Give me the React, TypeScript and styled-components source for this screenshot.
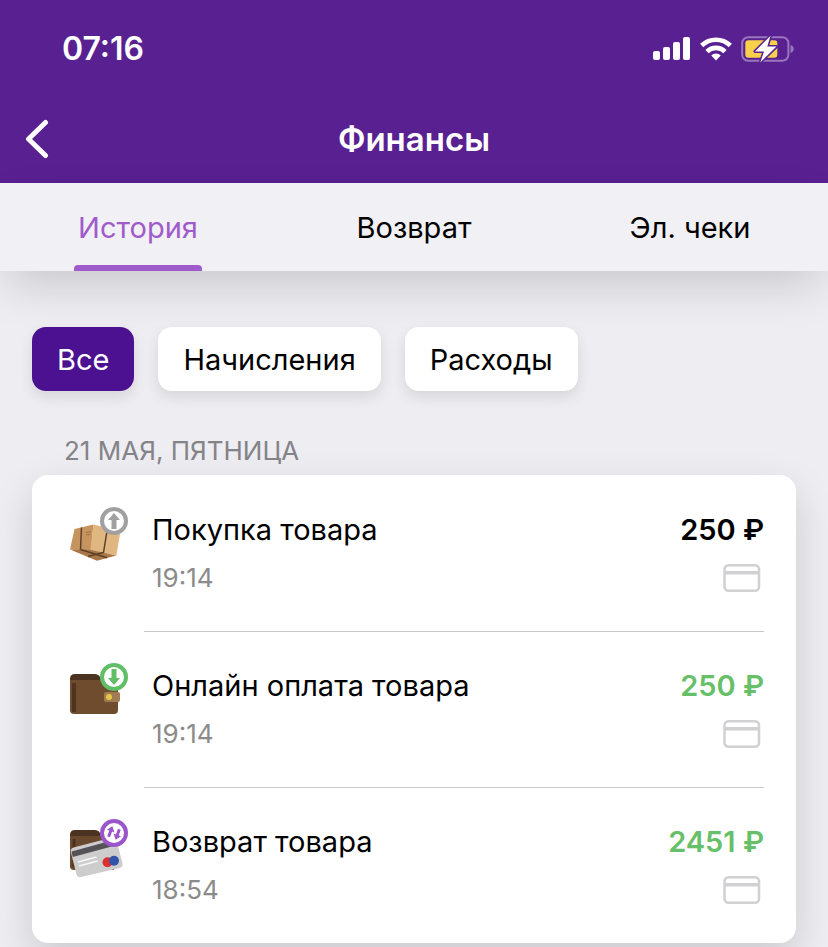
import React, { useState } from "react";
import styled, { createGlobalStyle } from "styled-components";

const GlobalStyle = createGlobalStyle`
  *, *::before, *::after { box-sizing: border-box; }
  body {
    margin: 0;
    background: #eeedf2;
    color: #000;
    font-family: Inter, "Liberation Sans", sans-serif;
  }
  button { font: inherit; color: inherit; border: 0; cursor: pointer; }
  h1, h2, h3, p, ul { margin: 0; padding: 0; }
`;

const Screen = styled.div`
  min-height: 100vh;
  overflow: hidden;
`;

const Header = styled.header`
  background: #582091;
  color: #fff;
`;

const StatusBar = styled.div`
  display: flex;
  align-items: center;
  justify-content: space-between;
  height: 98px;
  padding: 0 33px 0 62px;
`;

const Clock = styled.time`
  font-size: 32px;
  font-weight: 600;
  line-height: 40px;
`;

const StatusIcons = styled.div`
  display: flex;
  align-items: center;
  gap: 9px;
  svg { display: block; }
`;

const NavBar = styled.div`
  display: grid;
  grid-template-columns: 48px 1fr 48px;
  align-items: center;
  height: 85px;
  padding: 0 16px 4px;
`;

const BackButton = styled.button`
  display: flex;
  align-items: center;
  height: 48px;
  padding: 0 0 0 8px;
  background: none;
`;

const Title = styled.h1`
  font-size: 33px;
  font-weight: 600;
  line-height: 40px;
  text-align: center;
`;

const Tabs = styled.nav`
  display: grid;
  grid-template-columns: repeat(3, 1fr);
  height: 88px;
  background: #f1f0f5;
  box-shadow: 0 20px 48px -8px rgba(0, 0, 0, 0.17);
`;

const Tab = styled.button<{ $active: boolean }>`
  display: grid;
  grid-template-rows: 1fr 6px;
  justify-items: center;
  align-items: center;
  padding: 0;
  background: none;
  font-size: 29px;
  line-height: 36px;
  color: ${(p) => (p.$active ? "#a05bcb" : "#000")};

  &::after {
    content: "";
    width: 128px;
    height: 6px;
    border-radius: 4px 4px 0 0;
    background: ${(p) => (p.$active ? "#a05bcb" : "transparent")};
  }
`;

const TabLabel = styled.span`
  padding-top: 8px;
`;

const Main = styled.main`
  padding: 56px 32px 4px;
`;

const Filters = styled.div`
  display: flex;
  gap: 24px;
`;

const Chip = styled.button<{ $active: boolean }>`
  height: 64px;
  padding: 2px 25px 0;
  border-radius: 14px;
  font-size: 29px;
  line-height: 36px;
  color: ${(p) => (p.$active ? "#fff" : "#000")};
  background: ${(p) => (p.$active ? "#4b1190" : "#fff")};
  box-shadow: 0 6px 14px rgba(0, 0, 0, 0.1);
`;

const DateHeading = styled.h2`
  padding: 44px 32px 8px;
  font-size: 26px;
  font-weight: 400;
  line-height: 32px;
  text-transform: uppercase;
  color: #848388;
`;

const Card = styled.ul`
  list-style: none;
  padding: 0 32px;
  border-radius: 16px;
  background: #fff;
  box-shadow: 0 16px 40px rgba(0, 0, 0, 0.15);
`;

const Row = styled.li`
  display: grid;
  grid-template-columns: 80px 1fr;
  height: 156px;
`;

const RowIcon = styled.div`
  padding-top: 28px;
  svg { display: block; }
`;

const RowBody = styled.div<{ $first: boolean }>`
  display: grid;
  grid-template-columns: 1fr auto;
  grid-template-rows: 40px 32px;
  row-gap: 12px;
  padding: 34px 0 0 8px;
  border-top: 1px solid ${(p) => (p.$first ? "transparent" : "#c7c6ca")};
`;

const Name = styled.h3`
  font-size: 29px;
  font-weight: 400;
  line-height: 40px;
`;

const Amount = styled.p<{ $income: boolean }>`
  font-size: 29px;
  font-weight: 600;
  line-height: 40px;
  text-align: right;
  color: ${(p) => (p.$income ? "#68bf69" : "#000")};
`;

const Time = styled.time`
  font-size: 26px;
  line-height: 32px;
  color: #8b8b8b;
`;

const CardMark = styled.span`
  justify-self: end;
  align-self: center;
  padding-right: 3px;
  svg { display: block; }
`;

function SignalIcon() {
  return (
    <svg width="38" height="24" viewBox="0 0 38 24" fill="#fff" aria-label="Сигнал">
      <rect x="0" y="14" width="7" height="9" rx="2" />
      <rect x="10" y="10" width="7" height="13" rx="2" />
      <rect x="20" y="5" width="7" height="18" rx="2" />
      <rect x="30" y="0" width="7" height="23" rx="2" />
    </svg>
  );
}

function WifiIcon() {
  return (
    <svg width="32" height="24" viewBox="0 0 32 24" fill="none" stroke="#fff" strokeWidth="4.6" aria-label="Wi-Fi">
      <path d="M1.7 8.5a20.5 20.5 0 0 1 28.6 0" />
      <path d="M7 14.6a12.8 12.8 0 0 1 18 0" />
      <path d="M16 23.6l-4.8-5a6.800 6.800 0 0 1 9.600 0z" fill="#fff" stroke="none" />
    </svg>
  );
}

function BatteryIcon() {
  return (
    <svg width="54" height="28" viewBox="0 0 54 28" aria-label="Зарядка">
      <rect x="1.2" y="2.2" width="46.2" height="23.6" rx="6" fill="none" stroke="#9a76be" strokeWidth="2" />
      <path d="M49.500 10c2.500.8 3.200 2.800 3.200 4s-.7 3.200-3.200 4z" fill="#9a76be" />
      <rect x="4.300" y="5.300" width="32" height="17.400" rx="3" fill="#f7d149" />
      <path d="M29.500 0.800L14 16.400h9L19.300 27.400 35.500 11.600h-9.200z" fill="#fff" stroke="#582091" strokeWidth="3" paintOrder="stroke" strokeLinejoin="round" />
    </svg>
  );
}

function BackIcon() {
  return (
    <svg width="26" height="40" viewBox="0 0 26 40" fill="none" stroke="#fff" strokeWidth="5" strokeLinecap="round" strokeLinejoin="round" aria-hidden="true">
      <path d="M21.500 3.500L4.500 20l17 16.500" />
    </svg>
  );
}

type Kind = "purchase" | "payment" | "refund";

function PurchaseArt() {
  return (
    <>
      <path d="M6 46.500L26 45.500 52.300 52.500 33 57.700z" fill="#a97748" />
      <path d="M10.500 26L29.500 21.500 27 46.800 6 46.500z" fill="#c6955f" />
      <path d="M29.500 21.500L56.500 28 52.300 52.700 26.500 46.800z" fill="#e0b681" />
      <path d="M17.500 24.500L16.500 46.500" stroke="#5e4028" strokeWidth="1.500" fill="none" />
      <path d="M43.500 25L39.500 49.500 24 53.500" stroke="#5e4028" strokeWidth="1.500" fill="none" />
      <path d="M16.500 46.500L43 54.800" stroke="#5e4028" strokeWidth="1.500" fill="none" />
      <path d="M22 29.500l5-1M22 32l4.500-.7" stroke="#9c7145" strokeWidth="1" />
    </>
  );
}

function WalletArt() {
  return (
    <>
      <path d="M6 20q0-5 5-5h20q5 0 6 6l13 3v28H6z" fill="#4c3321" />
      <path d="M6 21h44q4 0 4 4v26q0 4-4 4H10q-4 0-4-4z" fill="#6f4c2e" />
      <rect x="8" y="24" width="4" height="29" fill="#4f3521" />
      <path d="M40 35q0-2 2-2h12q2 0 2 2v6q0 2-2 2H42q-2 0-2-2z" fill="#a17b54" />
      <circle cx="45" cy="38" r="3" fill="#e5c847" />
    </>
  );
}

function RefundArt() {
  return (
    <>
      <path d="M6 20q0-5 5-5h20q5 0 6 6l13 3v28H6z" fill="#4c3321" />
      <path d="M6 21h44v34H10q-4 0-4-4z" fill="#6a482d" />
      <path d="M10 24v28" stroke="#4b3220" strokeWidth="3" />
      <path d="M9.500 32.500L48 22.500q3.500-.8 4.500 2.500l6 23.500q.8 3.500-2.500 4.500L17 62q-3.500.8-4.500-2.500L6.800 37q-.8-3.500 2.700-4.500z" fill="#cecdce" />
      <path d="M7.500 36.500L51.500 24.500 53.200 30 8.800 42z" fill="#555357" />
      <path d="M14 47l18.500-5M15 51l18.500-5" stroke="#f8f7f8" strokeWidth="1.500" />
      <circle cx="43.500" cy="47.300" r="5" fill="#da302e" />
      <circle cx="50" cy="45.800" r="5" fill="#3454aa" />
    </>
  );
}

function OperationIcon({ kind }: { kind: Kind }) {
  const tone = { purchase: "#a0a0a0", payment: "#5fbe66", refund: "#9b55ca" }[kind];
  return (
    <svg width="66" height="64" viewBox="0 0 66 64" aria-hidden="true">
      {kind === "purchase" && <PurchaseArt />}
      {kind === "payment" && <WalletArt />}
      {kind === "refund" && <RefundArt />}
      <circle cx="50" cy="18" r="12" fill="#fff" stroke={tone} strokeWidth="4" />
      {kind === "purchase" && <path d="M50 10l6 7h-3.500v9h-5v-9H44z" fill={tone} />}
      {kind === "payment" && <path d="M50 26l6-7h-3.500v-9h-5v9H44z" fill={tone} />}
      {kind === "refund" && (
        <g fill={tone}>
          <path d="M0-5.500L4-.5H1.500V5.500h-3V-.5H-4z" transform="translate(46.500 16.500) rotate(20)" />
          <path d="M0 5.500L4 .5H1.500V-5.500h-3V.5H-4z" transform="translate(53.500 19.500) rotate(20)" />
        </g>
      )}
    </svg>
  );
}

function BankCardIcon() {
  return (
    <svg width="38" height="28" viewBox="0 0 38 28" fill="none" stroke="#d1d0d2" strokeWidth="2.500" aria-label="Банковская карта">
      <rect x="1.500" y="1.250" width="34.500" height="25.500" rx="4" />
      <path d="M2 8.700h34" strokeWidth="3.500" />
    </svg>
  );
}

const tabs = ["История", "Возврат", "Эл. чеки"];
const filters = ["Все", "Начисления", "Расходы"];
const operations: { kind: Kind; name: string; time: string; amount: number }[] = [
  { kind: "purchase", name: "Покупка товара", time: "19:14", amount: -250 },
  { kind: "payment", name: "Онлайн оплата товара", time: "19:14", amount: 250 },
  { kind: "refund", name: "Возврат товара", time: "18:54", amount: 2451 },
];

export default function App() {
  const [tab, setTab] = useState(0);
  const [filter, setFilter] = useState(0);
  const shown = operations.filter(
    (o) => filter === 0 || (filter === 1 ? o.amount > 0 : o.amount < 0)
  );

  return (
    <Screen>
      <GlobalStyle />
      <Header>
        <StatusBar>
          <Clock>07:16</Clock>
          <StatusIcons>
            <SignalIcon />
            <WifiIcon />
            <BatteryIcon />
          </StatusIcons>
        </StatusBar>
        <NavBar>
          <BackButton aria-label="Назад">
            <BackIcon />
          </BackButton>
          <Title>Финансы</Title>
        </NavBar>
      </Header>
      <Tabs>
        {tabs.map((label, i) => (
          <Tab key={label} $active={i === tab} aria-pressed={i === tab} onClick={() => setTab(i)}>
            <TabLabel>{label}</TabLabel>
          </Tab>
        ))}
      </Tabs>
      <Main>
        <Filters>
          {filters.map((label, i) => (
            <Chip key={label} $active={i === filter} aria-pressed={i === filter} onClick={() => setFilter(i)}>
              {label}
            </Chip>
          ))}
        </Filters>
        <DateHeading>21 мая, пятница</DateHeading>
        <Card>
          {shown.map((o, i) => (
            <Row key={o.name}>
              <RowIcon>
                <OperationIcon kind={o.kind} />
              </RowIcon>
              <RowBody $first={i === 0}>
                <Name>{o.name}</Name>
                <Amount $income={o.amount > 0}>{Math.abs(o.amount)} ₽</Amount>
                <Time>{o.time}</Time>
                <CardMark>
                  <BankCardIcon />
                </CardMark>
              </RowBody>
            </Row>
          ))}
        </Card>
      </Main>
    </Screen>
  );
}
